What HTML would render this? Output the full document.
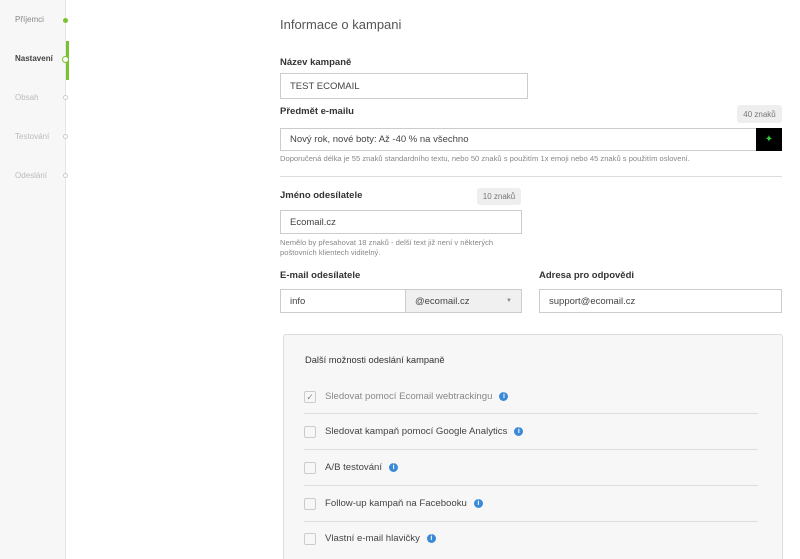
<!DOCTYPE html>
<html style="overflow:hidden;width:800px;height:559px"><head><meta charset="utf-8"><style>
*{margin:0;padding:0;box-sizing:border-box}
body{width:800px;height:559px;overflow:hidden;background:#fff;font-family:"Liberation Sans",sans-serif;color:#333;position:relative}
.a{position:absolute}
.side{left:0;top:0;width:66px;height:559px;background:#f7f7f7;border-right:1px solid #e6e6e6}
.nav{font-size:8px;color:#bbb;left:15px}
.dot{width:5px;height:5px;border-radius:50%;border:1px solid #ccc;background:#fff;left:63px}
.lbl{font-size:9.5px;font-weight:bold;color:#333}
.inp{border:1px solid #ccc;background:#fff;font-size:9.5px;color:#444;padding-left:9px;display:flex;align-items:center}
.help{font-size:7.6px;color:#888}
.badge{background:#eee;border-radius:3px;font-size:8px;color:#777;display:flex;align-items:center;justify-content:center}
.cb{width:12px;height:12px;border:1px solid #ccc;border-radius:2px;background:#f7f7f7;left:304px}
.opt{font-size:9.6px;color:#444;left:325px}
.info{display:inline-block;width:9px;height:9px;border-radius:50%;background:#3a8ad8;color:#fff;font-size:7px;font-weight:bold;text-align:center;line-height:9px;margin-left:7px;vertical-align:middle}
.ln{left:304px;width:454px;height:1px;background:#ddd}
</style></head><body>
<div class="a side"></div>
<div class="a" style="left:66px;top:41px;width:3px;height:39px;background:#7ac231"></div>
<div class="a nav" style="top:15px;color:#888">Příjemci</div>
<div class="a" style="left:63px;top:18px;width:5px;height:5px;border-radius:50%;background:#7ac231"></div>
<div class="a nav" style="top:54px;color:#444;font-weight:bold">Nastavení</div>
<div class="a" style="left:62px;top:56px;width:7px;height:7px;border-radius:50%;border:1.5px solid #7ac231;background:#fff"></div>
<div class="a nav" style="top:93px">Obsah</div><div class="a dot" style="top:95px"></div>
<div class="a nav" style="top:132px">Testování</div><div class="a dot" style="top:134px"></div>
<div class="a nav" style="top:171px">Odeslání</div><div class="a dot" style="top:173px"></div>

<div class="a" style="left:280px;top:17px;font-size:13px;color:#555">Informace o kampani</div>
<div class="a lbl" style="left:280px;top:57px">Název kampaně</div>
<div class="a inp" style="left:280px;top:73px;width:248px;height:26px">TEST ECOMAIL</div>
<div class="a lbl" style="left:280px;top:106px">Předmět e-mailu</div>
<div class="a badge" style="left:737px;top:105px;width:45px;height:18px">40 znaků</div>
<div class="a inp" style="left:280px;top:128px;width:477px;height:23px">Nový rok, nové boty: Až -40 % na všechno</div>
<div class="a" style="left:756px;top:128px;width:26px;height:23px;background:#000;color:#3c3;font-size:10px;text-align:center;line-height:23px">✦</div>
<div class="a help" style="left:280px;top:154px">Doporučená délka je 55 znaků standardního textu, nebo 50 znaků s použitím 1x emoji nebo 45 znaků s použitím oslovení.</div>
<div class="a" style="left:280px;top:176px;width:502px;height:1px;background:#ddd"></div>
<div class="a lbl" style="left:280px;top:190px">Jméno odesílatele</div>
<div class="a badge" style="left:477px;top:188px;width:44px;height:17px">10 znaků</div>
<div class="a inp" style="left:280px;top:210px;width:242px;height:24px">Ecomail.cz</div>
<div class="a help" style="left:280px;top:238px;line-height:10px">Nemělo by přesahovat 18 znaků - delší text již není v některých<br>poštovních klientech viditelný.</div>
<div class="a lbl" style="left:280px;top:270px">E-mail odesílatele</div>
<div class="a lbl" style="left:539px;top:270px">Adresa pro odpovědi</div>
<div class="a inp" style="left:280px;top:289px;width:126px;height:24px">info</div>
<div class="a inp" style="left:405px;top:289px;width:117px;height:24px;background:#f0f0f0">@ecomail.cz<span style="position:absolute;right:9px;font-size:6px;color:#888">▼</span></div>
<div class="a inp" style="left:539px;top:289px;width:243px;height:24px">support@ecomail.cz</div>

<div class="a" style="left:283px;top:334px;width:500px;height:230px;background:#f7f7f7;border:1px solid #ddd;border-radius:3px"></div>
<div class="a" style="left:305px;top:355px;font-size:9.3px;color:#333">Další možnosti odeslání kampaně</div>
<div class="a cb" style="top:391px;font-size:9px;color:#888;line-height:10px;text-align:center">✓</div>
<div class="a opt" style="top:391px;color:#888">Sledovat pomocí Ecomail webtrackingu<span class="info">i</span></div>
<div class="a ln" style="top:413px"></div>
<div class="a cb" style="top:426px"></div>
<div class="a opt" style="top:426px">Sledovat kampaň pomocí Google Analytics<span class="info">i</span></div>
<div class="a ln" style="top:449px"></div>
<div class="a cb" style="top:462px"></div>
<div class="a opt" style="top:462px">A/B testování<span class="info">i</span></div>
<div class="a ln" style="top:485px"></div>
<div class="a cb" style="top:498px"></div>
<div class="a opt" style="top:498px">Follow-up kampaň na Facebooku<span class="info">i</span></div>
<div class="a ln" style="top:521px"></div>
<div class="a cb" style="top:533px"></div>
<div class="a opt" style="top:533px">Vlastní e-mail hlavičky<span class="info">i</span></div>
</body></html>
